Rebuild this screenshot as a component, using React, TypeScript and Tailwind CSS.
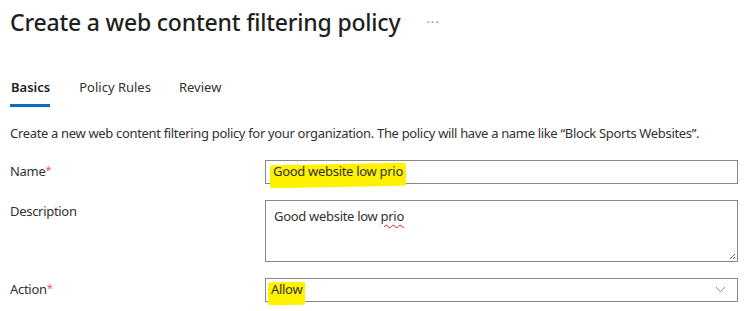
import { ChevronDown } from 'lucide-react';

const font = { fontFamily: '"Noto Sans", "Open Sans", sans-serif' };

const Highlight: React.FC<{ children: React.ReactNode; className?: string }> = ({ children, className }) => (
  <span className={`relative inline-block ${className ?? ''}`}>
    <span className="absolute -left-[3px] -right-[3px] top-[2px] -bottom-[5px] -skew-y-1 rounded-[2px] bg-[#fff200]" />
    <span className="relative">{children}</span>
  </span>
);

const Required = () => <span className="relative -top-[2px] text-[11px] text-[#e0605f]">*</span>;

const App: React.FC = () => {
  return (
    <div className="h-[311px] w-[749px] overflow-hidden bg-white pl-[10px] pr-[11px] text-[#323130]" style={font}>
      <div className="flex h-[44px] items-center">
        <h1 className="text-[23px] font-medium leading-none tracking-[-0.2px] text-[#201f1e]">
          Create a web content filtering policy
        </h1>
        <span className="ml-[26px] mt-[2px] text-[13px] tracking-[1px] text-[#8a8886]">···</span>
      </div>

      <div className="mt-[34px] flex h-[34px] items-start gap-[28px] text-[13px]">
        <div className="flex flex-col">
          <span className="px-[1px] font-semibold text-[#201f1e]">Basics</span>
          <span className="mt-[6px] h-[3px] w-[40px] bg-[#0f6cbd]" />
        </div>
        <span>Policy Rules</span>
        <span>Review</span>
      </div>

      <p className="mt-[12px] text-[13px] tracking-[-0.33px]">
        Create a new web content filtering policy for your organization. The policy will have a name like “Block Sports Websites”.
      </p>

      <div className="mt-[16px] grid grid-cols-[255px_1fr] gap-y-[16px] text-[13px] tracking-[-0.3px]">
        <label className="pt-[2px]">
          Name<Required />
        </label>
        <div className="flex h-[24px] items-center border border-[#8a8886] px-[7px]">
          <Highlight>Good website low prio</Highlight>
        </div>

        <label className="pt-[2px]">Description</label>
        <div className="relative h-[62px] border border-[#8a8886] px-[8px] pt-[6px]">
          <span>
            Good website low{' '}
            <span className="underline decoration-[#e81123] decoration-wavy decoration-[1px] underline-offset-[3px]">prio</span>
          </span>
          <svg className="absolute bottom-[1px] right-[1px]" width="7" height="7" viewBox="0 0 7 7">
            <path d="M6 1L1 6M6 4L4 6" stroke="#6b6b6b" strokeWidth="1" />
          </svg>
        </div>

        <label className="pt-[2px]">
          Action<Required />
        </label>
        <div className="flex h-[24px] items-center justify-between border border-[#8a8886] pl-[5px] pr-[8px]">
          <Highlight>Allow</Highlight>
          <ChevronDown size={17} strokeWidth={1} className="text-[#605e5c]" />
        </div>
      </div>
    </div>
  );
};

export default App;
